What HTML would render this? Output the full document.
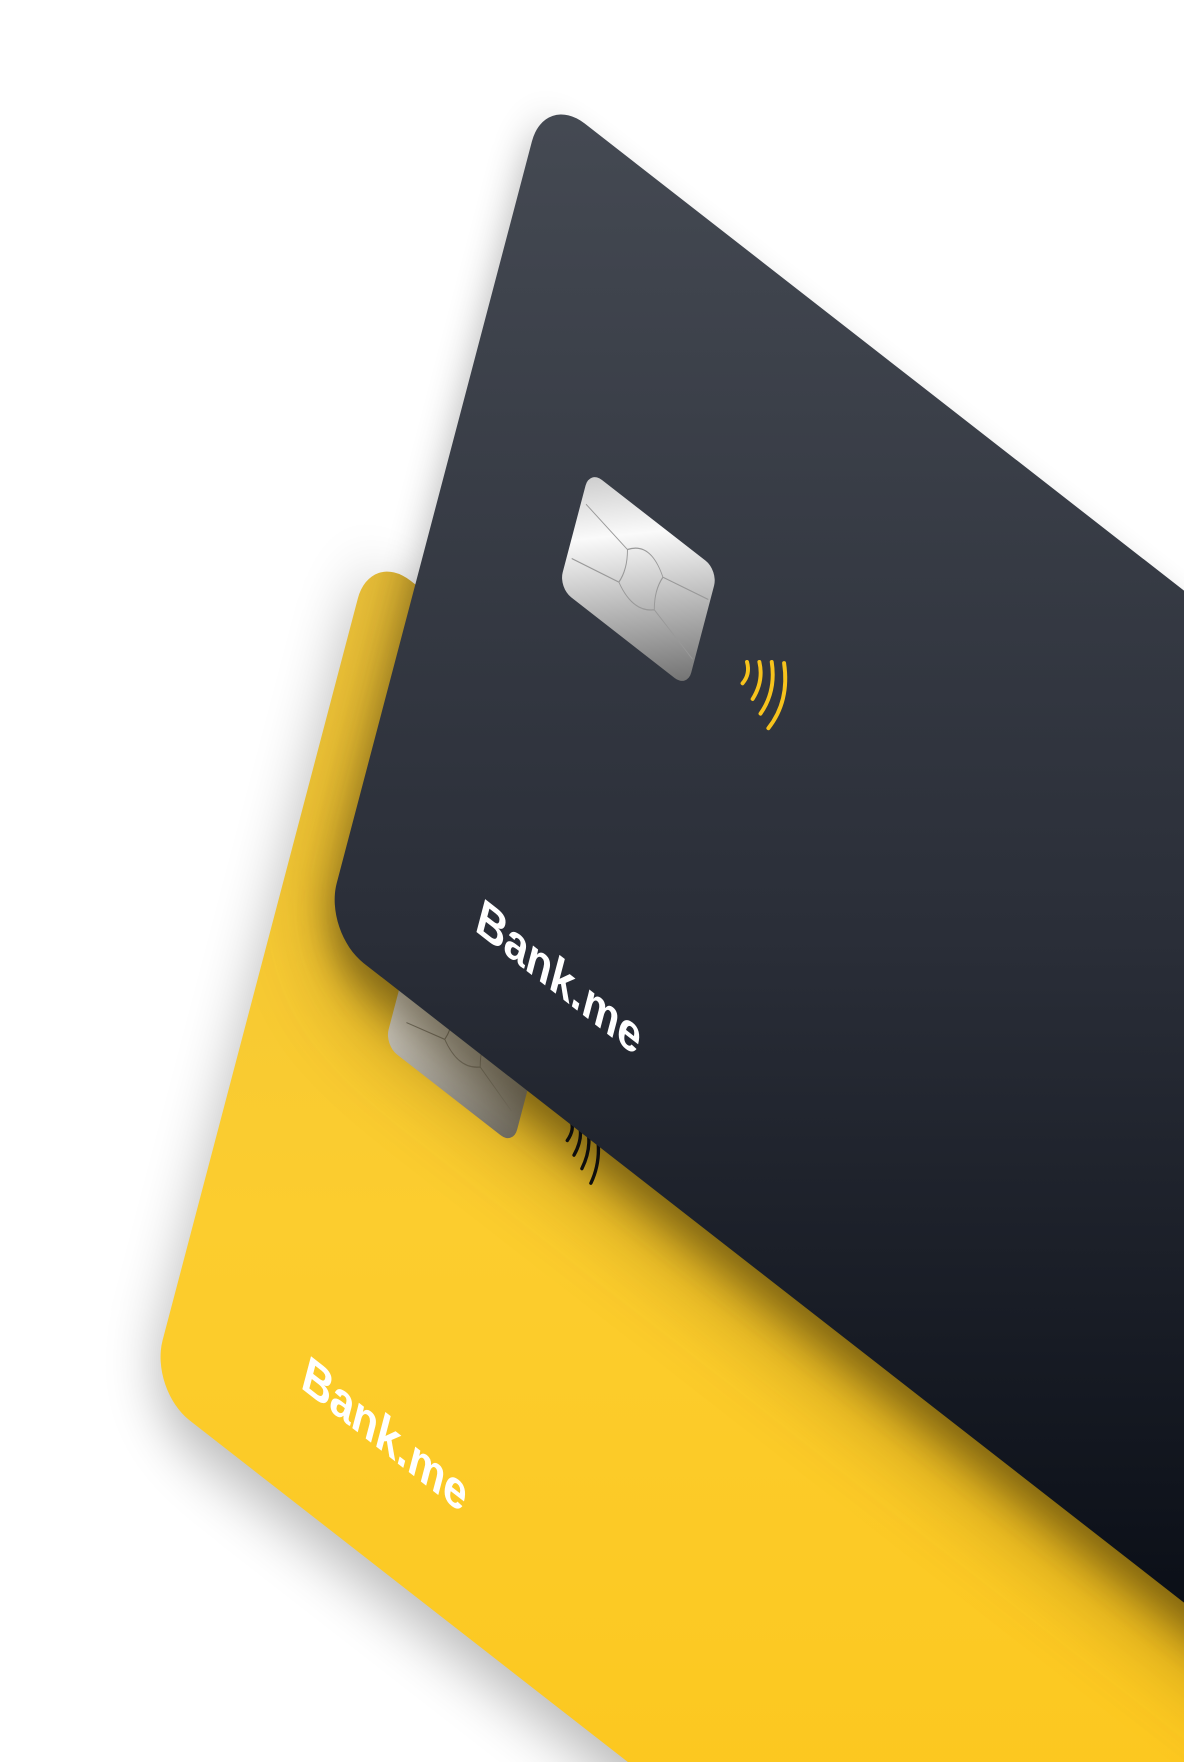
<!DOCTYPE html>
<html><head><meta charset="utf-8"><style>
html,body{margin:0;padding:0;background:#fff;width:1184px;height:1762px;overflow:hidden;position:relative}
svg{display:block;position:absolute;left:0;top:0}
</style></head><body>
<svg width="1184" height="1762" viewBox="0 0 1054 1568" xmlns="http://www.w3.org/2000/svg">
<defs>
<linearGradient id="dk" x1="0" y1="0" x2="1" y2="1">
<stop offset="0" stop-color="#454a53"/><stop offset="0.5" stop-color="#2a2e38"/><stop offset="1" stop-color="#03070f"/></linearGradient>
<linearGradient id="yl" x1="0" y1="0" x2="1" y2="1">
<stop offset="0" stop-color="#eec43c"/><stop offset="0.4" stop-color="#fccd2e"/><stop offset="1" stop-color="#fdc414"/></linearGradient>
<linearGradient id="ch" x1="0" y1="0" x2="1" y2="1">
<stop offset="0" stop-color="#c9c9c9"/><stop offset="0.3" stop-color="#fafafa"/><stop offset="0.6" stop-color="#bdbdbd"/><stop offset="1" stop-color="#6e6e6e"/></linearGradient>
<filter id="sh" x="-30%" y="-30%" width="160%" height="160%"><feGaussianBlur stdDeviation="28"/></filter>
<filter id="sh3" x="-30%" y="-30%" width="160%" height="160%"><feGaussianBlur stdDeviation="45"/></filter>
<filter id="sh2" x="-30%" y="-30%" width="160%" height="160%"><feGaussianBlur stdDeviation="18"/></filter>
<clipPath id="ycl"><rect x="0" y="0" width="1226" height="773" rx="45" transform="matrix(0.789,0.615,-0.2545,0.967,330,489)"/></clipPath>
</defs>
<rect x="0" y="20" width="1226" height="773" rx="45" fill="#000" opacity="0.28" filter="url(#sh)" transform="matrix(0.789,0.615,-0.2545,0.967,330,489)"/>
<g transform="matrix(0.789,0.615,-0.2545,0.967,330,489)">
<rect x="0" y="0" width="1226" height="773" rx="45" fill="url(#yl)"/>
<rect x="135" y="262" width="145" height="108" rx="14" fill="url(#ch)"/>
<path d="M150 290 L190 300 M150 340 L190 330 M230 300 L270 290 M230 330 L270 345 M190 300 Q210 280 230 300 Q225 315 230 330 Q210 345 190 330 Q195 315 190 300" stroke="#888" stroke-width="1" fill="none"/>
<text x="140" y="682" font-family="Liberation Sans, sans-serif" font-weight="bold" font-size="44" fill="#fff">Bank.me</text>
</g>
<g clip-path="url(#ycl)">
<rect x="0" y="30" width="1226" height="773" rx="45" fill="#5a4000" opacity="0.5" filter="url(#sh3)" transform="matrix(0.789,0.615,-0.2545,0.967,485,82)"/>
</g>
<g stroke="#111" stroke-width="3" fill="none" stroke-linecap="round">
<path d="M508 997 Q512 1005 505 1015"/>
<path d="M515 998 Q520 1012 511 1028"/>
<path d="M522 1000 Q528 1020 518 1040"/>
<path d="M530 1002 Q537 1030 526 1053"/>
</g>
<rect x="0" y="20" width="1226" height="773" rx="45" fill="#000" opacity="0.3" filter="url(#sh2)" transform="matrix(0.789,0.615,-0.2545,0.967,485,82)"/>
<g transform="matrix(0.789,0.615,-0.2545,0.967,485,82)">
<rect x="0" y="0" width="1226" height="773" rx="45" fill="url(#dk)"/>
<rect x="135" y="262" width="145" height="108" rx="14" fill="url(#ch)"/>
<path d="M140 290 L190 300 M140 340 L190 330 M230 300 L278 290 M230 330 L278 345 M190 300 Q210 280 230 300 Q225 315 230 330 Q210 345 190 330 Q195 315 190 300" stroke="#999" stroke-width="1" fill="none"/>
<text x="140" y="682" font-family="Liberation Sans, sans-serif" font-weight="bold" font-size="44" fill="#fff">Bank.me</text>
</g>
<g stroke="#f7c31c" stroke-width="3.5" fill="none" stroke-linecap="round">
<path d="M665 589 Q668 600 661 608"/>
<path d="M676 589 Q680 606 670 622"/>
<path d="M687 589 Q691 615 677 635"/>
<path d="M698 590 Q703 624 684 648"/>
</g>
</svg>
</body></html>
